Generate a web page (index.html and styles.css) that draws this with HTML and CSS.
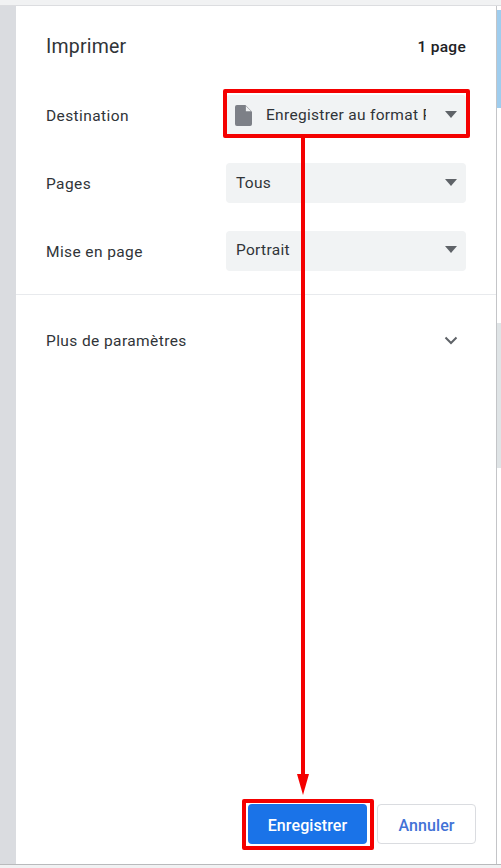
FILE: index.html
```html
<!DOCTYPE html>
<html>
<head>
    <title>Imprimer</title>
    <meta name="viewport" content="width=device-width, initial-scale=1">
    <link rel="stylesheet" href="styles.css">
</head>
<body>
    <div class="top-strip"></div>
    <div class="middle">
        <div class="left-strip"></div>
        <div class="dialog">
            <div class="header">
                <h1>Imprimer</h1>
                <div class="count">1 page</div>
            </div>

            <div class="settings">
                <div class="row">
                    <div class="label">Destination</div>
                    <div class="select">
                        <svg class="file-icon" width="17" height="21" viewBox="0 0 18 22" preserveAspectRatio="none">
                            <path d="M2 0H11L18 7V20A2 2 0 0 1 16 22H2A2 2 0 0 1 0 20V2A2 2 0 0 1 2 0Z" fill="#7d8087"/>
                            <path d="M11.5 1L17 6.5H11.5Z" fill="#f1f3f4"/>
                        </svg>
                        <span class="value value-clip">Enregistrer au format PDF</span>
                        <span class="caret"></span>
                    </div>
                </div>
                <div class="row">
                    <div class="label">Pages</div>
                    <div class="select">
                        <span class="value">Tous</span>
                        <span class="caret"></span>
                    </div>
                </div>
                <div class="row">
                    <div class="label">Mise en page</div>
                    <div class="select select-high">
                        <span class="value">Portrait</span>
                        <span class="caret"></span>
                    </div>
                </div>
            </div>

            <div class="more">
                <div class="label">Plus de paramètres</div>
                <svg class="chevron" width="14" height="9" viewBox="0 0 14 9">
                    <path d="M1.5 1.5L7 7L12.5 1.5" fill="none" stroke="#5f6368" stroke-width="2"/>
                </svg>
            </div>

            <div class="footer">
                <button type="button" class="btn primary">Enregistrer</button>
                <button type="button" class="btn cancel">Annuler</button>
            </div>
        </div>
        <div class="right-strip">
            <div class="blue-part"></div>
            <div class="gray-part"></div>
        </div>
    </div>
    <div class="bottom-strip"></div>

    <!-- red annotations drawn over the dialog -->
    <div class="mark mark-dest"></div>
    <div class="mark mark-save"></div>
    <svg class="arrow" width="24" height="662" viewBox="0 0 24 662">
        <rect x="10" y="0" width="4" height="642" fill="#f40000"/>
        <path d="M6 638H18L12 659Z" fill="#f40000"/>
    </svg>
</body>
</html>
```

FILE: styles.css
```css
* {
    box-sizing: border-box;
}

body {
    margin: 0;
    width: 501px;
    height: 868px;
    overflow: hidden;
    position: relative;
    background-color: #fff;
    color: #202124;
    font-family: Roboto, Arial, sans-serif;
    display: flex;
    flex-direction: column;
}

.top-strip {
    height: 6px;
    flex: none;
    background-color: #f1f2f3;
    border-bottom: 1px solid #dcdde0;
}

.bottom-strip {
    height: 4px;
    flex: none;
    background-color: #f1f2f3;
    border-top: 1px solid #b9babc;
}

.middle {
    flex: 1;
    display: flex;
    min-height: 0;
}

.left-strip {
    width: 16px;
    flex: none;
    background-color: #dadce0;
}

.right-strip {
    width: 5px;
    flex: none;
    border-left: 1px solid #c4c5c8;
    padding-top: 4px;
}

.blue-part {
    height: 98px;
    background-color: #9fcdee;
}

.gray-part {
    height: 145px;
    margin-top: 215px;
    background-color: #dfe4e6;
}

.dialog {
    flex: 1;
    min-width: 0;
    display: flex;
    flex-direction: column;
    background-color: #fff;
}

.header {
    display: flex;
    justify-content: space-between;
    align-items: flex-start;
    padding: 28px 30px 0;
    height: 83px;
}

h1 {
    margin: 0;
    font-size: 19.5px;
    font-weight: 400;
    line-height: 26px;
    letter-spacing: 0.2px;
    color: #303438;
}

.count {
    font-size: 15.5px;
    font-weight: 500;
    line-height: 26px;
    letter-spacing: 0.3px;
}

.settings {
    display: flex;
    flex-direction: column;
    gap: 28px;
    padding: 6px 30px 23px;
    border-bottom: 1px solid #e8eaed;
}

.row {
    display: flex;
    align-items: center;
    height: 40px;
}

.label {
    width: 180px;
    flex: none;
    margin-top: 2px;
    font-size: 15.5px;
    line-height: 20px;
    letter-spacing: 0.4px;
    color: #303438;
}

.select {
    flex: 1;
    min-width: 0;
    height: 40px;
    display: flex;
    align-items: center;
    padding: 0 9px 2px 10px;
    background-color: #f1f3f4;
    border-radius: 4px;
}

.select-high {
    padding-bottom: 4px;
}

.file-icon {
    flex: none;
    margin: 2px 14px 0 -1px;
}

.value {
    flex: 1;
    min-width: 0;
    margin-top: 2px;
    font-size: 15.5px;
    letter-spacing: 0.3px;
    color: #303438;
}

.value-clip {
    white-space: nowrap;
    overflow: hidden;
}

.caret {
    flex: none;
    margin-left: 19px;
    border-left: 6.5px solid transparent;
    border-right: 6.5px solid transparent;
    border-top: 7px solid #5f6368;
}

.more {
    display: flex;
    justify-content: space-between;
    align-items: center;
    padding: 15px 38px 0 30px;
    height: 75px;
}

.footer {
    margin-top: auto;
    display: flex;
    justify-content: flex-end;
    gap: 10px;
    padding: 0 20px 20px 0;
}

.btn {
    height: 40px;
    padding: 2px 0 0;
    border-radius: 4px;
    font-family: Roboto, Arial, sans-serif;
    font-size: 16px;
    font-weight: 500;
    letter-spacing: 0.1px;
}

.primary {
    width: 119px;
    border: none;
    background-color: #1a73e8;
    color: #fff;
}

.cancel {
    width: 99px;
    border: 1px solid #dadce0;
    background-color: #fff;
    color: #4272d6;
}

.mark {
    position: absolute;
    border: 4px solid #f40000;
    border-radius: 2px;
}

.mark-dest {
    left: 223px;
    top: 89px;
    width: 247px;
    height: 49px;
}

.mark-save {
    left: 242px;
    top: 799px;
    width: 132px;
    height: 51px;
}

.arrow {
    position: absolute;
    left: 291px;
    top: 136px;
}
```
